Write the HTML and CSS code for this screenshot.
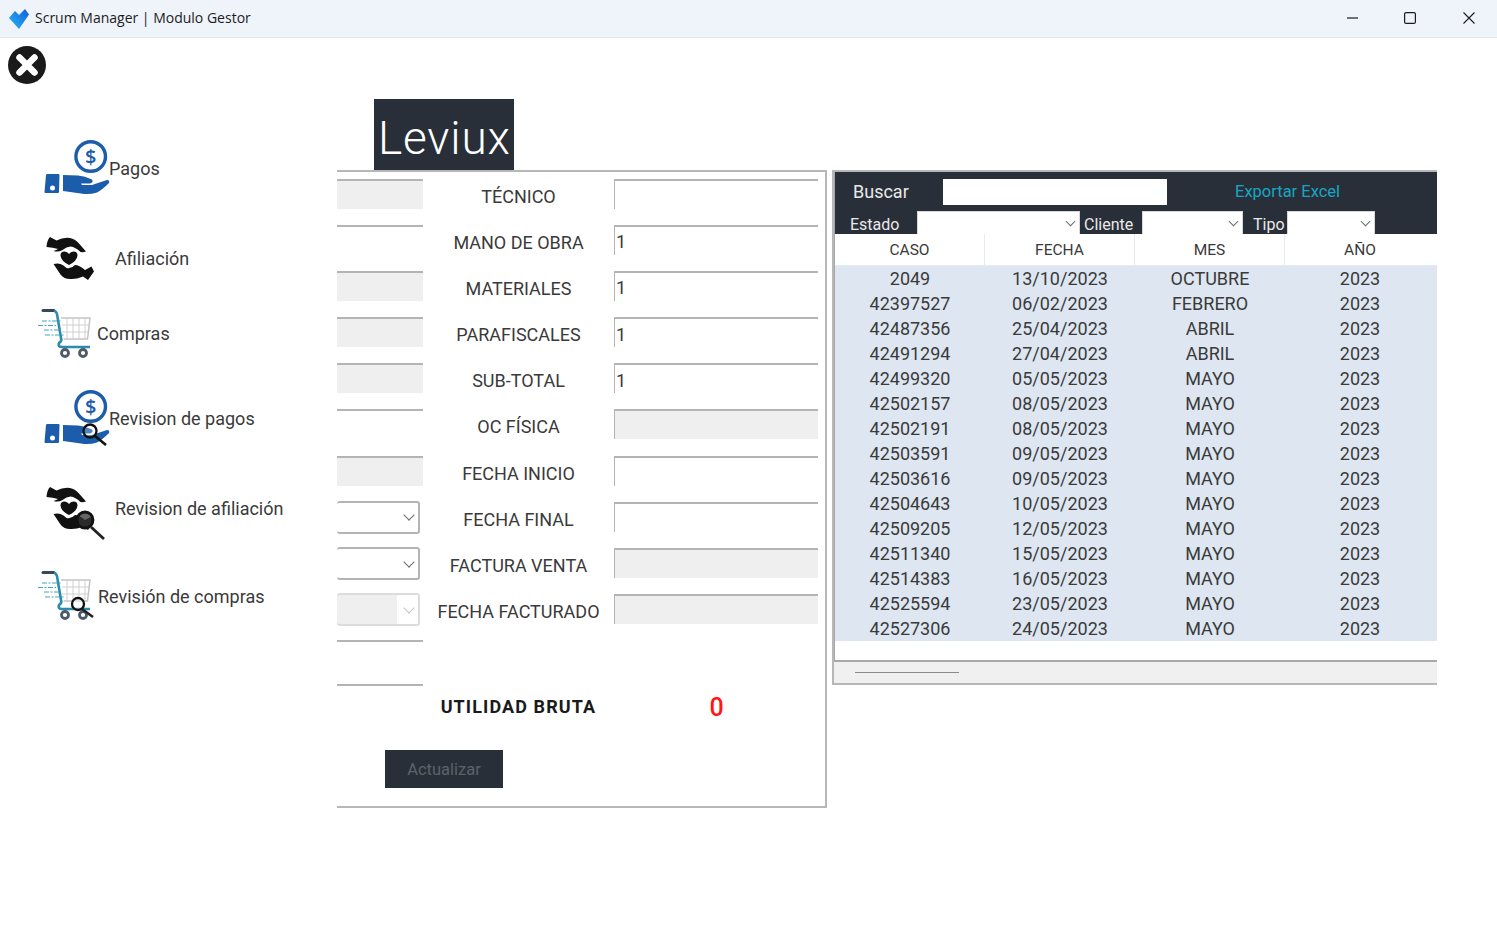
FILE: index.html
```html
<!DOCTYPE html>
<html lang="en">
<head>
  <meta charset="UTF-8">
  <title>Scrum Manager | Modulo Gestor</title>
  <link rel="stylesheet" href="styles.css">
</head>
<body>

  <svg class="defs" width="0" height="0">
    <defs>
      <linearGradient id="logoBlue" x1="0" y1="1" x2="1" y2="0">
        <stop offset="0" stop-color="#2bb8f7"/>
        <stop offset="1" stop-color="#0f5fd6"/>
      </linearGradient>

      <g id="payHand">
        <circle cx="90.700" cy="156.500" r="14.800" fill="#fff" stroke="#1c5dab" stroke-width="3.400"/>
        <text x="90.700" y="163.500" class="coin-sign">$</text>
        <path d="M47.500 174h11q1 0 1 1l-.5 17q0 1-1 1h-12.500q-1 0-1-1l1.500-17q0-1 1.500-1z" fill="#1c5dab"/>
        <circle cx="52.500" cy="188" r="2.500" fill="#fff"/>
        <path d="M63 175l15 .5q7 .5 14 4 2 2.500-2 4h-9l1 1.500h10l15-5q3 0 2 3-7 7-12 9.500-8 2.500-16 1l-18-2.500z" fill="#1c5dab"/>
      </g>

      <g id="careHands" fill="#111">
        <path d="M46.500 247q.5-7 3.500-10l6.500 3.500q7-3.500 13.500-2.500 5 1 8.500 5l7.500 8.500q-3 1-5.500.5-5-5-10-5.500-4 0-8 3.500-4 2.500-9 1 3-1 4.500-2-5-1.500-11.500-2z"/>
        <path d="M69 265q-8-4-8.500-9.500 0-4 4-4 3 0 4.500 2.500 1.500-2.500 4.500-2.500 4 0 4 4-.5 5.500-8.500 9.500z"/>
        <path d="M53.500 264q4-1 7 0 3 1 6 4 5 1 8.500-3 4 0 10 5l6.500-3.500 2.500 5-6 8.500-5-3.500q-7 3-13 2.500-6 0-9.500-4.500z"/>
      </g>

      <g id="cart">
        <path d="M61 318h29l-2.500 21h-24" fill="none" stroke="#c4c4c4" stroke-width="1.500"/>
        <path d="M67 318v21M73 318v21M79 318v21M85 318v21M62 325h27M62 332h26" fill="none" stroke="#d0d0d0" stroke-width="1"/>
        <path d="M43 310.500h11" stroke="#34495e" stroke-width="3" stroke-linecap="round"/>
        <path d="M54 311q2 0 3 3l4 24q1 3-1 4-2 2-1 4 1 1 3 1h28" fill="none" stroke="#2b8cab" stroke-width="2.600"/>
        <circle cx="65" cy="353" r="3.500" fill="#fff" stroke="#4d5b68" stroke-width="2.800"/>
        <circle cx="83" cy="353" r="3.500" fill="#fff" stroke="#4d5b68" stroke-width="2.800"/>
        <path d="M42 321h19M38 325.500h18M44 330h16M45 335h19" stroke="#3ea5c4" stroke-width="1.200" stroke-dasharray="5 1.500 2 1.500"/>
      </g>
    </defs>
  </svg>

  <header class="titlebar">
    <svg class="app-logo" viewBox="9 7 20 20" width="20" height="20">
      <path d="M9 16l6-7 4 4 6-6 4 5.500-10 14.500z" fill="url(#logoBlue)"/>
    </svg>
    <span class="app-title">Scrum Manager | Modulo Gestor</span>
    <div class="win-controls">
      <svg viewBox="0 0 12 12" width="12" height="12"><path d="M0 6h11" stroke="#1b1b1b" stroke-width="1.200"/></svg>
      <svg viewBox="0 0 12 12" width="12" height="12"><rect x=".6" y=".6" width="10.800" height="10.800" rx="1.500" fill="none" stroke="#1b1b1b" stroke-width="1.200"/></svg>
      <svg viewBox="0 0 12 12" width="12" height="12"><path d="M.5.500l11 11M11.500.500l-11 11" stroke="#1b1b1b" stroke-width="1.100"/></svg>
    </div>
  </header>

  <div class="main">

    <aside class="sidebar">
      <svg class="close-btn" viewBox="0 0 38 38" width="38" height="38">
        <circle cx="19" cy="19" r="19" fill="#1a1a1a"/>
        <path d="M11.500 11.500l15 15M26.500 11.500l-15 15" stroke="#fff" stroke-width="6.500" stroke-linecap="round"/>
      </svg>

      <nav class="nav">
        <a class="nav-item item-pagos">
          <svg viewBox="0 139 109 60" width="109" height="60"><use href="#payHand"/></svg>
          <span>Pagos</span>
        </a>
        <a class="nav-item item-afil">
          <svg viewBox="0 229 115 60" width="115" height="60"><use href="#careHands"/></svg>
          <span>Afiliación</span>
        </a>
        <a class="nav-item item-compras">
          <svg viewBox="0 304 97 60" width="97" height="60"><use href="#cart"/></svg>
          <span>Compras</span>
        </a>
        <a class="nav-item item-revpagos">
          <svg viewBox="0 389 109 60" width="109" height="60">
            <use href="#payHand" y="250"/>
            <circle cx="90" cy="431" r="6.500" fill="#fff" fill-opacity=".25" stroke="#111" stroke-width="2.300"/>
            <path d="M95 436l11 9" stroke="#111" stroke-width="2.600"/>
          </svg>
          <span>Revision de pagos</span>
        </a>
        <a class="nav-item item-revafil">
          <svg viewBox="0 479 115 60" width="115" height="60">
            <use href="#careHands" y="250"/>
            <circle cx="85" cy="520" r="8" fill="#333" fill-opacity=".75" stroke="#111" stroke-width="2.800"/>
            <path d="M91 527l13 12" stroke="#222" stroke-width="2.800"/>
          </svg>
          <span>Revision de afiliación</span>
        </a>
        <a class="nav-item item-revcompras">
          <svg viewBox="0 567 98 60" width="98" height="60">
            <use href="#cart" y="262"/>
            <circle cx="78" cy="604" r="6" fill="#fff" fill-opacity=".4" stroke="#111" stroke-width="2.300"/>
            <path d="M82 609l11 8" stroke="#222" stroke-width="2.600"/>
          </svg>
          <span>Revisión de compras</span>
        </a>
      </nav>
    </aside>

    <main class="content">
      <div class="brand">Leviux</div>

      <div class="panels">

        <section class="form-panel">
          <div class="form-grid">
            <input class="field" disabled>
            <label>TÉCNICO</label>
            <input class="field">

            <input class="field">
            <label>MANO DE OBRA</label>
            <input class="field" value="1">

            <input class="field" disabled>
            <label>MATERIALES</label>
            <input class="field" value="1">

            <input class="field" disabled>
            <label>PARAFISCALES</label>
            <input class="field" value="1">

            <input class="field" disabled>
            <label>SUB-TOTAL</label>
            <input class="field" value="1">

            <input class="field">
            <label>OC FÍSICA</label>
            <input class="field" disabled>

            <input class="field" disabled>
            <label>FECHA INICIO</label>
            <input class="field">

            <div class="select-wrap form-select"><select></select></div>
            <label>FECHA FINAL</label>
            <input class="field">

            <div class="select-wrap form-select"><select></select></div>
            <label>FACTURA VENTA</label>
            <input class="field" disabled>

            <div class="select-wrap form-select is-disabled"><select disabled></select></div>
            <label>FECHA FACTURADO</label>
            <input class="field" disabled>

            <input class="field"><span></span><span></span>

            <input class="field">
            <label class="total-label">UTILIDAD BRUTA</label>
            <div class="total-value">0</div>
          </div>
          <button class="update-btn" disabled>Actualizar</button>
        </section>

        <section class="list-panel">
          <div class="list-frame">
            <div class="list-head">
              <div class="search-row">
                <span class="search-label">Buscar</span>
                <input class="search-input">
                <a class="export-link">Exportar Excel</a>
              </div>
              <div class="filter-row">
                <span class="lbl-estado">Estado</span>
                <div class="select-wrap sel-estado"><select></select></div>
                <span class="lbl-cliente">Cliente</span>
                <div class="select-wrap sel-cliente"><select></select></div>
                <span class="lbl-tipo">Tipo</span>
                <div class="select-wrap sel-tipo"><select></select></div>
              </div>
            </div>

            <table class="cases">
              <thead>
                <tr><th>CASO</th><th>FECHA</th><th>MES</th><th>AÑO</th></tr>
              </thead>
              <tbody>
                <tr><td>2049</td><td>13/10/2023</td><td>OCTUBRE</td><td>2023</td></tr>
                <tr><td>42397527</td><td>06/02/2023</td><td>FEBRERO</td><td>2023</td></tr>
                <tr><td>42487356</td><td>25/04/2023</td><td>ABRIL</td><td>2023</td></tr>
                <tr><td>42491294</td><td>27/04/2023</td><td>ABRIL</td><td>2023</td></tr>
                <tr><td>42499320</td><td>05/05/2023</td><td>MAYO</td><td>2023</td></tr>
                <tr><td>42502157</td><td>08/05/2023</td><td>MAYO</td><td>2023</td></tr>
                <tr><td>42502191</td><td>08/05/2023</td><td>MAYO</td><td>2023</td></tr>
                <tr><td>42503591</td><td>09/05/2023</td><td>MAYO</td><td>2023</td></tr>
                <tr><td>42503616</td><td>09/05/2023</td><td>MAYO</td><td>2023</td></tr>
                <tr><td>42504643</td><td>10/05/2023</td><td>MAYO</td><td>2023</td></tr>
                <tr><td>42509205</td><td>12/05/2023</td><td>MAYO</td><td>2023</td></tr>
                <tr><td>42511340</td><td>15/05/2023</td><td>MAYO</td><td>2023</td></tr>
                <tr><td>42514383</td><td>16/05/2023</td><td>MAYO</td><td>2023</td></tr>
                <tr><td>42525594</td><td>23/05/2023</td><td>MAYO</td><td>2023</td></tr>
                <tr><td>42527306</td><td>24/05/2023</td><td>MAYO</td><td>2023</td></tr>
              </tbody>
            </table>
          </div>
          <div class="hscroll"><div class="hscroll-thumb"></div></div>
        </section>

      </div>
    </main>

  </div>

</body>
</html>
```

FILE: styles.css
```css
* {
  box-sizing: border-box;
}
html, body {
  height: 100%;
}
body {
  margin: 0;
  overflow: hidden;
  background-color: #fff;
  color: #3a3a3a;
  font-family: Roboto, "Liberation Sans", sans-serif;
  font-size: 18px;
}
.defs {
  position: absolute;
}
.coin-sign {
  font-family: "Open Sans", sans-serif;
  font-size: 20px;
  font-weight: 600;
  fill: #1c5dab;
  text-anchor: middle;
}

/* title bar */
.titlebar {
  display: flex;
  align-items: center;
  height: 38px;
  padding-left: 9px;
  padding-bottom: 2px;
  background-color: #eff3fa;
  border-bottom: 1px solid #e4e6ea;
}
.app-logo {
  margin-top: 2px;
  margin-right: 6px;
}
.app-title {
  font-family: "Open Sans", sans-serif;
  font-size: 14px;
  color: #1c1c1c;
}
.win-controls {
  display: flex;
  gap: 46px;
  margin-left: auto;
  padding-right: 22px;
}
.win-controls svg:nth-child(2) {
  margin-left: -1px;
  margin-right: 1px;
}

.main {
  display: flex;
}

/* sidebar */
.sidebar {
  width: 337px;
  flex-shrink: 0;
  padding-top: 8px;
}
.close-btn {
  display: block;
  margin-left: 7.500px;
  margin-top: -.5px;
}
.nav {
  display: flex;
  flex-direction: column;
  margin-top: 55.500px;
}
.nav-item {
  display: flex;
  align-items: center;
  height: 60px;
  white-space: nowrap;
}
.nav-item span {
  margin-bottom: 2px;
}
.nav-item svg {
  flex-shrink: 0;
  overflow: visible;
}
.item-afil { margin-top: 30px; }
.item-compras { margin-top: 15px; }
.item-revpagos { margin-top: 25px; }
.item-revafil { margin-top: 30px; }
.item-revcompras { margin-top: 28px; }

/* main content */
.content {
  padding-top: 61px;
}
.brand {
  width: 140px;
  height: 71px;
  margin-left: 37px;
  padding-left: 4px;
  background-color: #292f38;
  color: #fff;
  font-size: 46px;
  font-weight: 300;
  line-height: 78px;
  letter-spacing: .8px;
}
.panels {
  display: flex;
  align-items: flex-start;
}

/* form */
.form-panel {
  width: 490px;
  height: 638px;
  border-top: 2px solid #b7b7b7;
  border-right: 2px solid #b7b7b7;
  border-bottom: 2px solid #b7b7b7;
  overflow: hidden;
}
.form-grid {
  display: grid;
  grid-template-columns: 86px 191px 204px;
  grid-template-rows: repeat(10, 46.2px) 43.500px 66.500px;
  margin-top: 6.500px;
}
.form-grid label {
  text-align: center;
  line-height: 35px;
  white-space: nowrap;
}
.field {
  display: block;
  width: 100%;
  height: 30px;
  padding: 3px 2px 1px 1px;
  border: none;
  border-top: 2px solid #b4b4b4;
  border-left: 1px solid #b4b4b4;
  border-radius: 0;
  outline: none;
  background-color: #fff;
  color: #3a3a3a;
  font: inherit;
}
.form-grid > .field:nth-child(3n+1) {
  border-left: none;
}
.field:disabled {
  background-color: #efefef;
}
.form-grid .total-label {
  margin-top: 5px;
  color: #1a1a1a;
  font-weight: 700;
  letter-spacing: 1.100px;
}
.total-value {
  margin-top: 7px;
  padding-left: 1px;
  text-align: center;
  color: #ff1616;
  font-size: 25px;
  font-weight: 500;
  line-height: 34px;
}
.update-btn {
  display: block;
  width: 118px;
  height: 38px;
  margin-left: 48px;
  border: none;
  background-color: #292f38;
  color: #5d6269;
  font: inherit;
  font-size: 16.500px;
}

/* selects with own chevron */
.select-wrap {
  position: relative;
  background-color: #fff;
}
.select-wrap select {
  display: block;
  width: 100%;
  height: 100%;
  border: none;
  outline: none;
  background: transparent;
  appearance: none;
}
.select-wrap::after {
  content: "";
  position: absolute;
  right: 5px;
  top: 50%;
  width: 7px;
  height: 7px;
  margin-top: -6px;
  border-right: 1.500px solid #6d6d6d;
  border-bottom: 1.500px solid #6d6d6d;
  transform: rotate(45deg);
}
.form-select {
  width: 83px;
  height: 33px;
  margin-top: -1px;
  border: 2px solid #b4b4b4;
  border-left: none;
  border-radius: 3px;
}
.form-select.is-disabled {
  border-color: #dcdcdc;
  background: linear-gradient(to right, #efefef 60px, #fff 60px);
}
.form-select.is-disabled::after {
  border-color: #c6c6c6;
}

/* list */
.list-panel {
  width: 605px;
  height: 515px;
  margin-left: 5px;
  border-top: 2px solid #b7b7b7;
  border-left: 2px solid #b7b7b7;
  border-bottom: 2px solid #b7b7b7;
  overflow: hidden;
}
.list-frame {
  height: 489.500px;
  border-left: 1px solid #a8a8a8;
  border-bottom: 2px solid #a8a8a8;
}
.list-head {
  height: 62px;
  background-color: #292f38;
  color: #e9e9e9;
}
.search-row {
  display: flex;
  align-items: center;
  height: 39px;
  padding: 3px 0 3px 18px;
}
.search-label {
  width: 90px;
  margin-top: -1px;
}
.search-input {
  width: 224px;
  height: 26px;
  border: none;
  outline: none;
  background-color: #fff;
}
.export-link {
  margin-top: -1px;
  margin-left: 68px;
  color: #17a6c4;
  font-size: 16.500px;
}
.filter-row {
  display: flex;
  align-items: flex-end;
  height: 23px;
  padding-left: 15px;
  font-size: 16px;
  line-height: 21px;
}
.filter-row span {
  margin-bottom: -1px;
}
.filter-row .select-wrap {
  height: 23px;
  border: 1px solid #d8d8d8;
  border-bottom: none;
}
.filter-row .select-wrap::after {
  width: 6px;
  height: 6px;
  margin-top: -5px;
}
.lbl-estado { width: 67px; }
.sel-estado { width: 163px; }
.lbl-cliente { width: 58px; margin-left: 4px; }
.sel-cliente { width: 101px; }
.lbl-tipo { width: 34px; margin-left: 10px; }
.sel-tipo { width: 88px; }

.cases {
  width: 602px;
  border-collapse: separate;
  border-spacing: 0;
  table-layout: fixed;
  text-align: center;
}
.cases th {
  width: 150px;
  height: 32px;
  padding: 0;
  border-right: 1px solid #e6ebf0;
  border-bottom: 1px solid #e6ebf0;
  background-color: #fff;
  font-size: 15.500px;
  font-weight: 400;
}
.cases th:last-child {
  width: 152px;
  border-right: none;
  padding-right: 2px;
}
.cases tbody {
  background-color: #dee7f1;
}
.cases td {
  height: 25px;
  padding: 0;
  line-height: 25px;
}
.cases td:last-child {
  padding-right: 2px;
}

.hscroll {
  height: 22px;
  padding: 10px 0 0 21px;
  background-color: #f0f0f0;
}
.hscroll-thumb {
  width: 104px;
  height: 1px;
  background-color: #8a8a8a;
}
```
